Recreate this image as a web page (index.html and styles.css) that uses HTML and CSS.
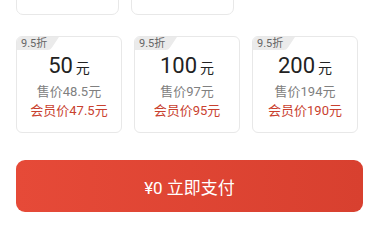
FILE: index.html
```html
<!DOCTYPE html>
<html>
<head>
<meta charset="utf-8">
<link rel="stylesheet" href="styles.css">
</head>
<body>
<div class="page">
  <div class="prev-row">
    <div class="prev-grid">
      <div class="prev-card"></div>
      <div class="prev-card"></div>
    </div>
  </div>
  <div class="grid">
    <div class="card">
      <span class="badge">9.5折</span>
      <div class="amount"><span class="num">50</span><span class="unit">元</span></div>
      <div class="price">售价48.5元</div>
      <div class="member">会员价47.5元</div>
    </div>
    <div class="card">
      <span class="badge">9.5折</span>
      <div class="amount"><span class="num">100</span><span class="unit">元</span></div>
      <div class="price">售价97元</div>
      <div class="member">会员价95元</div>
    </div>
    <div class="card">
      <span class="badge">9.5折</span>
      <div class="amount"><span class="num">200</span><span class="unit">元</span></div>
      <div class="price">售价194元</div>
      <div class="member">会员价190元</div>
    </div>
  </div>
  <button class="pay">¥0 立即支付</button>
</div>
</body>
</html>
```

FILE: styles.css
```css
html, body {
  margin: 0;
  padding: 0;
  background: #ffffff;
}
body {
  font-family: Roboto, "Noto Sans CJK SC", sans-serif;
  width: 380px;
  height: 225px;
  overflow: hidden;
}
.page {
  padding: 0 17px 0 16px;
}
.prev-row {
  height: 15px;
  overflow: hidden;
}
.prev-grid {
  display: grid;
  grid-template-columns: 103px 103px;
  column-gap: 12px;
  margin-top: -30px;
}
.prev-card {
  height: 45px;
  border: 1px solid #e8e8e8;
  border-radius: 7px;
  box-sizing: border-box;
}
.grid {
  display: grid;
  grid-template-columns: 106px 106px 106px;
  column-gap: 12px;
  margin-top: 21px;
}
.card {
  box-sizing: border-box;
  height: 97px;
  border: 1px solid #e8e8e8;
  border-radius: 6px;
  overflow: hidden;
  display: flex;
  flex-direction: column;
  align-items: center;
}
.badge {
  align-self: flex-start;
  box-sizing: border-box;
  width: 42px;
  height: 13px;
  line-height: 13px;
  padding-left: 4px;
  font-size: 11px;
  color: #666;
  background: #ebebeb;
  clip-path: path('M0 0 H42 L35 10.5 Q33.5 13 30.5 13 H0 Z');
}
.amount {
  margin-top: 3px;
  color: #222;
  line-height: 26px;
  height: 26px;
}
.num {
  font-size: 22px;
}
.unit {
  font-size: 14px;
  margin-left: 3px;
}
.price {
  margin-top: 3px;
  font-size: 13px;
  line-height: 19px;
  color: #808080;
}
.member {
  font-size: 13px;
  line-height: 19px;
  color: #c9412f;
}
.pay {
  display: block;
  width: 347px;
  height: 52px;
  margin-top: 27px;
  border: none;
  border-radius: 9px;
  background: linear-gradient(90deg, #e64a38, #d8402f);
  color: #fff;
  font-family: Roboto, "Noto Sans CJK SC", sans-serif;
  font-size: 17px;
  padding: 0;
}
```
